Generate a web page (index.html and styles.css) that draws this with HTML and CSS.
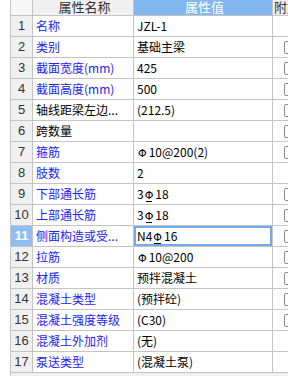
FILE: index.html
```html
<!DOCTYPE html>
<html lang="zh-CN">
<head>
    <meta charset="UTF-8">
    <meta name="viewport" content="width=device-width, initial-scale=1.0">
    <title>属性编辑器</title>
    <link rel="stylesheet" href="styles.css">
</head>
<body>

    <div class="sheet">
        <div class="row head">
            <div class="cell num"></div>
            <div class="cell name">属性名称</div>
            <div class="cell value">属性值</div>
            <div class="cell extra">附加</div>
        </div>

        <div class="row">
            <div class="cell num">1</div>
            <div class="cell name blue">名称</div>
            <div class="cell value">JZL-1</div>
            <div class="cell extra"></div>
        </div>
        <div class="row">
            <div class="cell num">2</div>
            <div class="cell name blue">类别</div>
            <div class="cell value">基础主梁</div>
            <div class="cell extra"><span class="box"></span></div>
        </div>
        <div class="row">
            <div class="cell num">3</div>
            <div class="cell name blue">截面宽度(mm)</div>
            <div class="cell value">425</div>
            <div class="cell extra"><span class="box"></span></div>
        </div>
        <div class="row">
            <div class="cell num">4</div>
            <div class="cell name blue">截面高度(mm)</div>
            <div class="cell value">500</div>
            <div class="cell extra"><span class="box"></span></div>
        </div>
        <div class="row">
            <div class="cell num">5</div>
            <div class="cell name">轴线距梁左边...</div>
            <div class="cell value">(212.5)</div>
            <div class="cell extra"><span class="box"></span></div>
        </div>
        <div class="row">
            <div class="cell num">6</div>
            <div class="cell name">跨数量</div>
            <div class="cell value"></div>
            <div class="cell extra"><span class="box"></span></div>
        </div>
        <div class="row">
            <div class="cell num">7</div>
            <div class="cell name blue">箍筋</div>
            <div class="cell value"><span class="bar">Φ</span>10@200(2)</div>
            <div class="cell extra"><span class="box"></span></div>
        </div>
        <div class="row">
            <div class="cell num">8</div>
            <div class="cell name blue">肢数</div>
            <div class="cell value">2</div>
            <div class="cell extra"></div>
        </div>
        <div class="row">
            <div class="cell num">9</div>
            <div class="cell name blue">下部通长筋</div>
            <div class="cell value">3<span class="bar g3">Φ</span>18</div>
            <div class="cell extra"><span class="box"></span></div>
        </div>
        <div class="row">
            <div class="cell num">10</div>
            <div class="cell name blue">上部通长筋</div>
            <div class="cell value">3<span class="bar g3">Φ</span>18</div>
            <div class="cell extra"><span class="box"></span></div>
        </div>
        <div class="row">
            <div class="cell num active">11</div>
            <div class="cell name blue">侧面构造或受...</div>
            <div class="cell value editing">N4<span class="bar g3">Φ</span>16</div>
            <div class="cell extra"><span class="box"></span></div>
        </div>
        <div class="row">
            <div class="cell num">12</div>
            <div class="cell name blue">拉筋</div>
            <div class="cell value"><span class="bar">Φ</span>10@200</div>
            <div class="cell extra"><span class="box"></span></div>
        </div>
        <div class="row">
            <div class="cell num">13</div>
            <div class="cell name blue">材质</div>
            <div class="cell value">预拌混凝土</div>
            <div class="cell extra"><span class="box"></span></div>
        </div>
        <div class="row">
            <div class="cell num">14</div>
            <div class="cell name blue">混凝土类型</div>
            <div class="cell value">(预拌砼)</div>
            <div class="cell extra"><span class="box"></span></div>
        </div>
        <div class="row">
            <div class="cell num">15</div>
            <div class="cell name blue">混凝土强度等级</div>
            <div class="cell value">(C30)</div>
            <div class="cell extra"><span class="box"></span></div>
        </div>
        <div class="row">
            <div class="cell num">16</div>
            <div class="cell name blue">混凝土外加剂</div>
            <div class="cell value">(无)</div>
            <div class="cell extra"></div>
        </div>
        <div class="row">
            <div class="cell num">17</div>
            <div class="cell name blue">泵送类型</div>
            <div class="cell value">(混凝土泵)</div>
            <div class="cell extra"></div>
        </div>
    </div>

</body>
</html>
```

FILE: styles.css
```css
body {
    margin: 0;
    background-color: #ffffff;
    font-family: "Noto Sans CJK SC", "Liberation Sans", sans-serif;
    font-size: 12px;
    color: #000000;
    overflow: hidden;
}

.sheet {
    margin-left: 10px;
    height: 376px;
    border-left: 1px solid #c4c4c4;
    background-color: #f0f0f0;
}

.row {
    display: grid;
    grid-template-columns: 22px 101px 139px 40px;
    height: 21px;
}

.row.head {
    height: 16px;
}

.cell {
    box-sizing: border-box;
    border-right: 1px solid #c4c4c4;
    border-bottom: 1px solid #c4c4c4;
    background-color: #ffffff;
    line-height: 20px;
    white-space: nowrap;
    overflow: hidden;
}

.head .cell {
    line-height: 14px;
    text-align: center;
    color: #333333;
    background-color: #f0f0f0;
    font-size: 13px;
}

.head .num {
    background-color: #f7f7f7;
}

.head .value {
    background-color: #82b6ef;
    color: #ffffff;
}

.head .extra {
    text-align: left;
    padding-left: 1px;
}

.num {
    text-align: center;
    background-color: #f0f0f0;
    color: #333333;
    font-family: "Liberation Sans", sans-serif;
    font-size: 13px;
}

.num.active {
    background-color: #8fbef2;
    color: #ffffff;
    font-weight: bold;
}

.name {
    padding-left: 3px;
}

.name.blue {
    color: #2323f0;
}

.value {
    padding-left: 3px;
}

.value.editing {
    box-shadow: inset 0 0 0 2px #72aaea;
}

.bar {
    display: inline-block;
    position: relative;
    margin: 0 2px 0 1px;
    font-family: "DejaVu Sans", sans-serif;
    font-size: 11px;
}

.bar.g3::after {
    content: "";
    position: absolute;
    left: 1px;
    right: 1px;
    bottom: 4px;
    height: 1px;
    background-color: #000000;
}

.extra {
    padding-left: 11px;
}

.box {
    display: inline-block;
    box-sizing: border-box;
    width: 14px;
    height: 13px;
    margin-top: 4px;
    border: 1px solid #8a8a8a;
    border-radius: 2px;
    background-color: #ffffff;
    vertical-align: top;
}
```
